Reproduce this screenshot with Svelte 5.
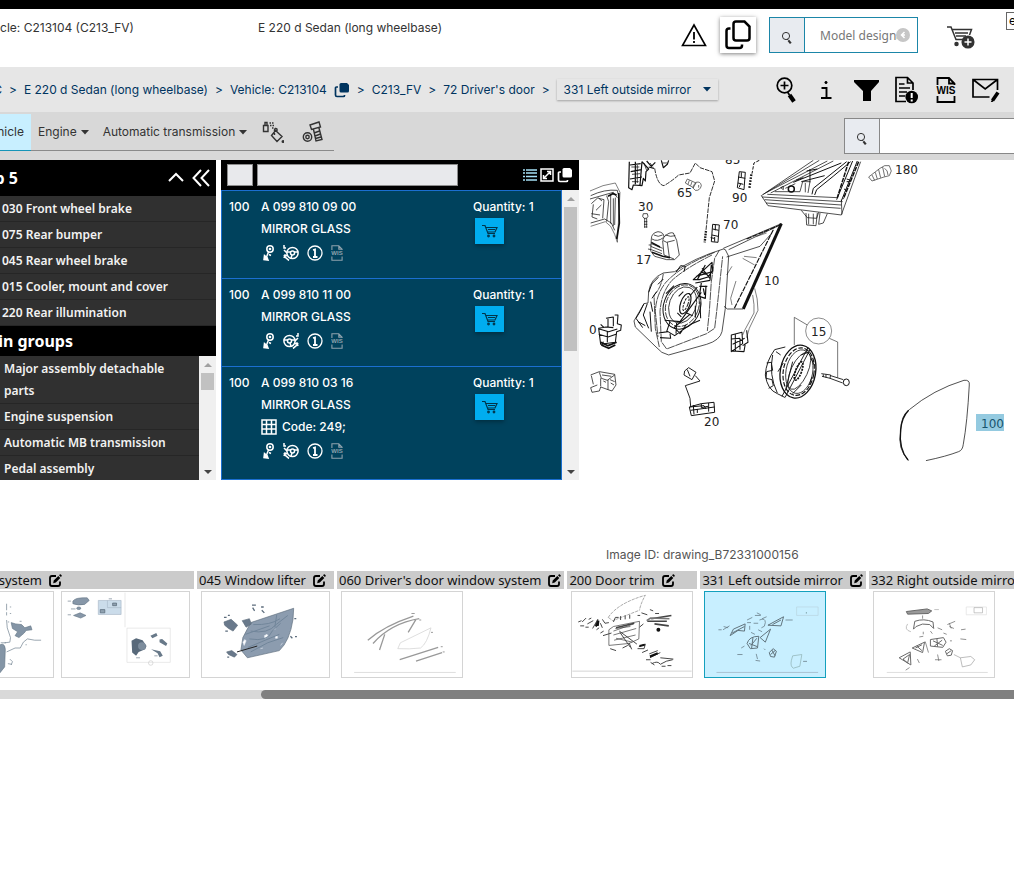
<script lang="ts">
  type Part = { pos: string; number: string; name: string; code?: string; side: "L" | "R" };

  const topGroups = [
    "030 Front wheel brake",
    "075 Rear bumper",
    "045 Rear wheel brake",
    "015 Cooler, mount and cover",
    "220 Rear illumination",
  ];

  const mainGroups = [
    "Major assembly detachable parts",
    "Engine suspension",
    "Automatic MB transmission",
    "Pedal assembly",
  ];

  const parts: Part[] = [
    { pos: "100", number: "A 099 810 09 00", name: "MIRROR GLASS", side: "L" },
    { pos: "100", number: "A 099 810 11 00", name: "MIRROR GLASS", side: "R" },
    { pos: "100", number: "A 099 810 03 16", name: "MIRROR GLASS", code: "Code: 249;", side: "L" },
  ];

  const callouts = [
    { x: 97, y: 37, label: "65" },
    { x: 145, y: 4, label: "85" },
    { x: 152, y: 42, label: "90" },
    { x: 58, y: 51, label: "30" },
    { x: 143, y: 69, label: "70" },
    { x: 56, y: 104, label: "17" },
    { x: 184, y: 125, label: "10" },
    { x: 315, y: 14, label: "180" },
    { x: 9, y: 174, label: "0" },
    { x: 231, y: 176, label: "15" },
    { x: 124, y: 266, label: "20" },
  ];
</script>

{#snippet magnifier()}
  <svg class="mag" viewBox="0 0 12 14" width="12" height="14" fill="none" stroke="#333">
    <circle cx="5" cy="5" r="3.6" />
    <path d="M6 8l1.4 1" />
    <path d="M7.4 9.4l2.4 3" stroke-width="2.2" />
  </svg>
{/snippet}

{#snippet copy()}
  <svg viewBox="0 0 16 16" width="16" height="16">
    <path d="M4 5H2.500Q1.500 5 1.500 6V13Q1.500 14.500 3 14.500H9.500Q10.500 14.500 10.500 13.500V13" fill="none" stroke="currentColor" stroke-width="1.700" />
    <path d="M7 1H13L15 3V9Q15 10.500 13.500 10.500H7Q5.500 10.500 5.500 9V2.500Q5.500 1 7 1Z" fill="currentColor" />
  </svg>
{/snippet}

{#snippet edit()}
  <svg class="edit" viewBox="0 0 13 13" width="13" height="13">
    <path d="M7 2H3Q1 2 1 4V10Q1 12 3 12H9Q11 12 11 10V7.500" fill="none" stroke="#000" stroke-width="1.800" />
    <path d="M4.200 9.300L4.700 6.500L9.300 1.900L11.300 3.900L6.800 8.600Z M10 1.200L10.800.4Q11.300 0 11.900.5L12.600 1.200Q13 1.800 12.600 2.300L11.900 3.100Z" />
  </svg>
{/snippet}

{#snippet wis(color: string)}
  <svg viewBox="0 0 20 26" width="100%" height="100%" fill="none" stroke={color} stroke-width="1.800">
    <path d="M1.500 8V1H13L18.500 6.500V8M13 1V6.500H18.500M1.500 19V25H18.500V19" />
    <text x="10" y="17" text-anchor="middle" font-family="Liberation Sans, sans-serif" font-weight="700" font-size="10" fill={color} stroke="none">WIS</text>
  </svg>
{/snippet}

{#snippet caret()}
  <svg class="caret" viewBox="0 0 8 5" width="8" height="5"><path d="M0 0H8L4 4.500Z" fill="currentColor" /></svg>
{/snippet}

{#snippet cart()}
  <svg viewBox="0 0 16 14" width="16" height="14" fill="none" stroke="#00354a" stroke-width="1.200">
    <path d="M0 1.500H3L6 9.500H13M4 3.500H15L13 8H6M6 5.500H13" />
    <circle cx="6.500" cy="12" r=".8" /><circle cx="12" cy="12" r=".8" />
  </svg>
{/snippet}

<div class="page">
  <div class="topline"></div>

  <header class="header">
    <div class="vehicle"><span>Vehicle: C213104 (C213_FV)</span></div>
    <div class="model">E 220 d Sedan (long wheelbase)</div>
    <div class="headerTools">
      <button type="button" class="plain warn" aria-label="Warnings">
        <svg viewBox="0 0 26 24" width="26" height="24" fill="none" stroke="#000" stroke-width="1.600">
          <path d="M13 2L24.500 22.500H1.500Z" />
          <path d="M13 9V16.500M13 18V20" stroke-width="1.800" />
        </svg>
      </button>
      <button type="button" class="copyButton" aria-label="Copy">
        <svg viewBox="0 0 26 30" width="26" height="30" fill="none" stroke="#000" stroke-width="2.500">
          <path d="M11 1.500H19.500L24.500 6.500V18Q24.500 20.500 22 20.500H11Q8.500 20.500 8.500 18V4Q8.500 1.500 11 1.500Z" />
          <path d="M5.500 8.500H4Q1.500 8.500 1.500 11V25.500Q1.500 28 4 28H14.500Q17 28 17 25.500V24.500" />
        </svg>
      </button>
      <div class="search">
        <button type="button" class="searchButton" aria-label="Search">{@render magnifier()}</button>
        <input type="text" aria-label="Model designation" placeholder="Model designation" />
        <button type="button" class="clear" aria-label="Clear">
          <svg viewBox="0 0 14 14" width="14" height="14"><circle cx="7" cy="7" r="7" fill="#c6c6c6" /><path d="M8.500 4L5.500 7L8.500 10M5.500 7H9" fill="none" stroke="#fff" stroke-width="1.500" /></svg>
        </button>
      </div>
      <button type="button" class="plain basket" aria-label="Shopping cart">
        <svg viewBox="0 0 28 24" width="28" height="24" fill="none" stroke="#333" stroke-width="1.500">
          <path d="M0 2H4L9 14.500H16M5 4.500H24.500L22.500 10M8 8H21M9 11H19" />
          <circle cx="9.500" cy="19" r="1.500" fill="#333" />
          <circle cx="21" cy="17" r="5.800" fill="#333" />
          <path d="M21 13.500V20.500M17.500 17H24.500" stroke="#fff" />
        </svg>
      </button>
      <div class="langBox">e</div>
    </div>
  </header>

  <nav class="crumbs">
    <div class="trail">
      <a href="#cat" class="cut">MBC</a>
      <span>&gt;</span>
      <a href="#model">E 220 d Sedan (long wheelbase)</a>
      <span>&gt;</span>
      <a href="#vehicle">Vehicle: C213104</a>
      {@render copy()}
      <span>&gt;</span>
      <a href="#fv">C213_FV</a>
      <span>&gt;</span>
      <a href="#door">72 Driver's door</a>
      <span>&gt;</span>
      <div class="dropdown">
        <select aria-label="Subgroup"><option>331 Left outside mirror</option></select>
        {@render caret()}
      </div>
    </div>
    <div class="tools">
      <button type="button" aria-label="Zoom">
        <svg viewBox="0 0 20 26" width="20" height="26" fill="none" stroke="#000">
          <circle cx="8.500" cy="8.500" r="7.300" stroke-width="1.700" />
          <path d="M8.500 4.500V12.500M4.500 8.500H12.500" stroke-width="1.700" />
          <path d="M11.500 15L13.500 18" stroke-width="1.700" />
          <path d="M13.500 18L18 24.500" stroke-width="4.200" />
        </svg>
      </button>
      <button type="button" aria-label="Information">
        <svg viewBox="0 0 12 20" width="12" height="20" fill="none" stroke="#000" stroke-width="1.900">
          <path d="M1.500 8H6.500V18M1 18H11.500" /><circle cx="6" cy="2.500" r="1.100" fill="#000" stroke-width="1" />
        </svg>
      </button>
      <button type="button" aria-label="Filter">
        <svg viewBox="0 0 25 22" width="25" height="22"><path d="M0 1H25V3L17 12V22H9V12L0 3Z" /></svg>
      </button>
      <button type="button" aria-label="Notes">
        <svg viewBox="-2 0 24 28" width="24" height="28" fill="none" stroke="#000" stroke-width="1.700">
          <path d="M10 25.500H0V1.500H11.500L17 7V14M11.500 1.500V7H17M3 8H8.500M3 12H14M3 16H11M3 20H9" />
          <circle cx="15.700" cy="21" r="6.300" fill="#000" stroke="none" />
          <path d="M15.700 17V22M15.700 23.500V25.500" stroke="#fff" stroke-width="2" />
        </svg>
      </button>
      <button type="button" aria-label="Workshop information"><span class="wisBig">{@render wis("#000")}</span></button>
      <button type="button" aria-label="Message">
        <svg viewBox="0 0 28 24" width="28" height="24" fill="none" stroke="#000" stroke-width="1.700">
          <path d="M17.500 19H1V1.500H25.500V12M1 1.500L13.200 11L25.500 1.500" />
          <path d="M20.500 22.500L26 14.500" stroke-width="3.600" /><path d="M19.500 24L21 22" />
        </svg>
      </button>
    </div>
  </nav>

  <div class="tabBar">
    <div class="tabs">
      <button type="button" class="active"><span>Vehicle</span></button>
      <button type="button">Engine {@render caret()}</button>
      <button type="button">Automatic transmission {@render caret()}</button>
      <button type="button" class="iconTab" aria-label="Paint and fluids">
        <svg viewBox="0 0 22 22" width="22" height="22" fill="none" stroke="#333" stroke-width="1.400">
          <path d="M1.500 4.500H6V10.500H1.500ZM3 4.500V1.500H5V4.500" />
          <path d="M7.500 2H12M8 4.500H12M10 7H12" stroke-dasharray="1.500 1" />
          <path d="M13.500 9.500L20 15.500L15 20.500L9.500 14.500ZM12.500 14V9Q13 6.500 15 8V12" /><circle cx="21" cy="20.500" r=".8" />
        </svg>
      </button>
      <button type="button" class="iconTab" aria-label="Standard parts">
        <svg viewBox="0 0 22 22" width="22" height="22" fill="none" stroke="#333" stroke-width="1.400">
          <circle cx="5.500" cy="16" r="4.200" /><circle cx="5.500" cy="16" r="1.700" />
          <path d="M8 4L17 1L18.500 6L9.500 8.500ZM11.500 8.500L14 20L20 18.500L17 7M12 12L17.500 10M13 15L18.500 13M13.500 17.500L19 16" />
        </svg>
      </button>
    </div>
    <div class="search partSearch">
      <button type="button" class="searchButton" aria-label="Search parts">{@render magnifier()}</button>
      <input type="text" aria-label="Part search" />
    </div>
  </div>

  <main class="workspace">
    <aside class="groups">
      <div class="topTitle">
        <h2><span>Top 5</span></h2>
        <svg viewBox="0 0 42 18" width="42" height="18" fill="none" stroke="#fff" stroke-width="2">
          <path d="M1 12L8 5L15 12M33 1L25.500 9L33 17M41 1L33.500 9L41 17" />
        </svg>
      </div>
      <ul class="topList">
        {#each topGroups as group}
          <li>{group}</li>
        {/each}
      </ul>
      <h2 class="mainTitle"><span>Main groups</span></h2>
      <div class="scrollPane">
        <ul class="mainList">
          {#each mainGroups as group}
            <li>{group}</li>
          {/each}
        </ul>
        <div class="scrollbar"><i class="up"></i><b class="short"></b><i class="down"></i></div>
      </div>
    </aside>

    <section class="parts">
      <div class="partsHead">
        <input type="text" class="posFilter" aria-label="Position" />
        <input type="text" class="textFilter" aria-label="Filter parts" />
        <div class="partsTools">
          <svg viewBox="0 0 14 12" width="14" height="12" stroke="#a5dff5" stroke-width="1.500"><path d="M0 1H2M0 4H2M0 7.500H2M0 11H2M3 1H14M3 4H14M3 7.500H14M3 11H14" /></svg>
          <svg viewBox="0 0 14 14" width="14" height="14" fill="none" stroke="#fff" stroke-width="1.500"><path d="M1 1H13V13H1ZM4 10L10 4M7 3.500H10.500V7M3.500 7V10.500H7" /></svg>
          {@render copy()}
        </div>
      </div>
      <div class="scrollPane">
        <div class="partList">
          {#each parts as part}
            <article class="part">
              <div>{part.pos}</div>
              <div>
                <div>{part.number}</div>
                <div>{part.name}</div>
                {#if part.code}
                  <div class="code">
                    <svg viewBox="0 0 16 16" width="16" height="16" fill="none" stroke="#fff" stroke-width="1.500"><path d="M1 1H15V15H1ZM1 5.500H15M1 10H15M5.500 1V15M10.500 1V15" /></svg>
                    {part.code}
                  </div>
                {/if}
                <div class="partIcons">
                  <svg viewBox="0 0 12 16" width="12" height="16" fill="none" stroke="#fff" stroke-width="1.500">
                    <circle cx="7" cy="4" r="3.200" /><circle cx="7" cy="4" r=".6" />
                    <path d="M5.500 7L3.500 12M6 9.500L8 10.500" />
                    <path d="M1.500 10.500L4 12.500L5 15L1 14.500Z" fill="#fff" />
                  </svg>
                  <svg class:flip={part.side === "R"} viewBox="0 0 16 16" width="16" height="16" fill="none" stroke="#fff" stroke-width="1.500">
                    <circle cx="9.500" cy="8" r="5.600" /><circle cx="9.500" cy="8" r="2" />
                    <path d="M4.500 7L8 7M11 7L15 7M9 10L8 13M1 0V3H3M1 5L4 8M1 10Q2 13 6 15.500M1 13L2 10L4.500 11" />
                  </svg>
                  <svg viewBox="0 0 16 16" width="16" height="16" fill="none" stroke="#fff" stroke-width="1.300">
                    <circle cx="8" cy="8" r="7" /><path d="M6 5L8 4.500V11.500M6 12H10.500" stroke-width="1.800" />
                  </svg>
                  <span class="wisSmall">{@render wis("#8fa3ad")}</span>
                </div>
              </div>
              <div>
                <div>Quantity: 1</div>
                <button type="button" class="addCart" aria-label="Add to cart">{@render cart()}</button>
              </div>
            </article>
          {/each}
        </div>
        <div class="scrollbar"><i class="up"></i><b></b><i class="down"></i></div>
      </div>
    </section>

    <section class="drawing">
      <svg viewBox="0 0 434 320" width="434" height="320">
        <g transform="translate(0 -5) scale(.3333)" fill="none" stroke="#111" stroke-width="2.200" stroke-linejoin="round">
          <!-- connector and cable at the top -->
          <path d="M148 20L146 98L156 104L160 90L186 92L190 70L196 78L198 50L206 42L186 20M150 30L182 26M152 50L184 44M150 72L186 66M166 20V88M186 20L180 90M200 18L214 34L226 22M206 36L222 40M244 16L250 38L262 28L266 16" stroke-width="3.600" />
          <path d="M154 36H178M156 58L180 56M172 30V84M156 80H176M192 24L200 46M210 24L218 34M248 24H262" />
          <path d="M224 40Q232 90 252 92Q276 78 296 60L330 54L346 24L360 38L396 50L404 78L388 128L378 226" stroke-dasharray="14 3" stroke-width="2.600" />
          <path d="M378 228L374 262" stroke-width="7" stroke-dasharray="5 3" />
          <path d="M538 16L522 24L516 56" stroke-width="3" stroke-dasharray="10 4" /><path d="M514 58L508 102" stroke-width="7" stroke-dasharray="5 4" />
          <!-- screw 65 -->
          <path d="M322 72L316 84L340 98L348 84ZM328 76L324 88M336 80L332 92M348 82Q362 78 364 92Q360 108 346 106Q336 100 340 92ZM356 90V98" stroke-width="1.800" />
          <!-- clip 90 -->
          <path d="M478 50L496 52L492 104L472 98L476 66ZM474 66L496 70M474 84L490 88M484 52V66M478 96L482 86" stroke-width="3" />
          <!-- housing on the left edge -->
          <path d="M30 108Q70 88 106 84L120 112L112 262L104 238L92 214L76 200L32 214" stroke-width="1.600" />
          <path d="M32 122Q74 102 112 106L114 116M30 132L100 112L112 128M34 146L54 128L66 138M32 204L74 192L94 204L104 226M40 148L36 186L52 192M56 130L72 134L68 190M80 122L86 140L80 200M92 120V206M100 130V214M64 150L48 166M34 176L60 180M106 128L104 210" />
          <path d="M116 114L118 204L110 252M84 124L98 116L110 120" stroke-width="5" />
          <!-- screw 30 -->
          <path d="M190 176H202L204 184L200 190H192L188 184ZM194 190V218M200 190V218M192 200H202M192 208H202M192 216H202" />
          <!-- clip 70 -->
          <path d="M398 208L418 210L414 262L394 260ZM398 222L416 226M396 240L414 244M406 210V226M392 248L402 250M404 246L404 260" stroke-width="3" />
          <!-- actuator 17 -->
          <path d="M214 252Q214 234 234 230Q252 232 252 246Q268 230 280 234L290 256L298 300L284 314L260 314L224 304L212 288ZM216 252Q232 262 250 248M252 246L248 256L260 262L284 256M248 258L252 300L282 312M262 262L268 306M214 266L248 280M212 274L246 288M214 284L246 296M206 270L214 270M204 282L214 284M222 240Q234 248 248 240M256 240L272 244L286 242" />
          <path d="M214 262L240 276M216 292L248 304L270 308" stroke-width="4.500" />
          <!-- mirror 10 -->
          <path d="M430 280L604 206L490 462H442L432 454M440 306L540 274L574 236M446 284L592 214" />
          <path d="M604 206L490 462" stroke-width="9" />
          <path d="M580 224L462 462M500 252L600 210" stroke-width="3.500" stroke-dasharray="16 3" />
          <path d="M468 378L452 430L456 450M488 310L524 330M492 304L530 308M456 334L440 360M530 244L560 234" stroke-width="1.600" />
          <path d="M430 282L436 284L446 304L436 460L426 530Q420 556 380 568L266 600Q244 596 228 576L166 516L162 498L192 446L204 444L206 410Q212 370 250 354L284 350Q340 310 430 282Z" />
          <path d="M250 356Q244 400 222 420L226 520L238 576M404 292Q300 334 256 384Q228 420 226 470L234 546M396 300Q316 340 276 376Q244 412 240 470L244 560L260 582L380 536L404 520L410 470L428 304M418 286L404 310L394 380L388 470L382 528" stroke-dasharray="24 2" />
          <path d="M288 352L302 332L316 334L312 350M206 412L216 386L236 366M216 430L230 410M192 446L180 470L168 490L188 518M202 446L190 480L206 520M210 470L214 530M250 372L234 388M212 440L218 470M174 500L196 512" stroke-width="3" />
          <path d="M340 374L396 322L398 348L384 366L358 374ZM348 364L390 352M352 374L376 330M366 340L390 370M346 384L390 376L394 330M358 394H382M364 384L358 424L376 430L378 392M362 350L380 358M370 400L374 420" stroke-width="3.600" />
          <ellipse cx="306" cy="454" rx="55" ry="70" transform="rotate(20 306 454)" stroke-width="3" />
          <ellipse cx="307" cy="452" rx="49" ry="64" transform="rotate(20 307 452)" stroke-dasharray="20 4" />
          <ellipse cx="308" cy="450" rx="40" ry="56" transform="rotate(20 308 450)" />
          <ellipse cx="316" cy="446" rx="14" ry="32" transform="rotate(20 316 446)" stroke-width="3.500" />
          <ellipse cx="318" cy="446" rx="6" ry="22" transform="rotate(20 318 446)" stroke-width="3" stroke-dasharray="8 3" />
          <path d="M258 416L282 392M254 496L300 500L364 412M284 516L330 478M270 500L260 530M290 504L288 536M320 474L338 482M332 420L352 396M236 534L264 530L284 542L332 508L360 496M240 548L272 550L270 536M282 516L300 536L318 510M360 440L362 490M346 452V488M296 424L310 410M292 474L304 486" stroke-width="3.200" />
          <path d="M524 400Q534 430 534 466L508 520L500 548M518 420Q524 450 522 474L494 526L488 540" stroke-width="1.600" />
          <path d="M454 540L486 532L488 566L454 590ZM454 552L480 550M458 568L494 550M456 588L492 590L496 566M466 536V588M480 550V584M500 526L504 562L488 572" stroke-width="3.200" />
          <!-- triangular frame at the right -->
          <path d="M544 122L700 16M544 122L564 152L784 180L842 20M550 118L718 16M560 112L742 18M572 114L760 18M546 126L788 140M562 118L772 128M554 134L784 150M784 134L786 178M558 144L782 160" />
          <path d="M770 134L818 18M784 138L832 18M800 80H812M800 72L812 76M792 102L800 106M696 118L700 100Q750 60 800 20M704 120L710 104Q758 66 812 20M640 82L784 24M648 76L670 68M664 80L734 62M690 42V82M680 48L712 42" stroke-width="3" />
          <path d="M806 20L772 128M836 20L790 132" stroke-width="4.500" stroke-dasharray="14 3" />
          <circle cx="634" cy="102" r="9" stroke-width="4.500" /><path d="M602 98L610 94V104ZM616 100L646 86M584 110H660L668 80L690 80L684 114M676 84V112" />
          <path d="M664 166L682 188L710 190L716 172M678 174L680 210L708 212L712 174M686 176V208M700 176V208M720 174L716 208L730 204L742 176" />
          <path d="M866 66L900 40L914 32L928 32L934 48L928 62L912 66L876 78ZM876 60L884 76M886 52L892 72M896 44L902 68M908 36L914 64M914 40Q924 46 924 60" stroke-width="1.800" />
          <!-- plug and socket, lower left -->
          <path d="M78 490L100 486V514M84 488V516M104 480H114L112 506L124 510L122 526L110 530L106 562L62 568L56 520L78 516L100 518M58 522L86 530L112 522M56 538L84 546L108 538M70 560L66 570M62 508L72 518M82 528V562" stroke-width="3.200" />
          <path d="M62 562L84 572L110 562M64 570L86 580L106 570" stroke-width="5" />
          <path d="M32 660L58 650L104 658L108 690L96 708L84 704L62 696L58 708L36 712L32 698L52 690M58 652L64 670L82 676L104 660M62 670V694M84 674V704M34 662L40 688M90 674L104 680M66 660L94 664M70 678L78 682M92 684L102 690" />
          <!-- lamp 20 -->
          <path d="M314 648L326 638L348 652L336 674L312 660ZM322 644L330 664M346 662L360 678L316 692L330 730L332 754" stroke-width="2.800" />
          <path d="M328 756L364 746L402 742L404 772L334 782ZM332 766L404 756M340 750L342 778M364 746V758L384 754M330 756L372 752L378 762M386 744V770M352 762V774" stroke-width="3" />
          <!-- drive unit 15 -->
          <ellipse cx="654" cy="650" rx="53" ry="80" transform="rotate(10 654 650)" stroke-width="4" />
          <ellipse cx="656" cy="650" rx="46" ry="72" transform="rotate(10 656 650)" stroke-width="3.500" stroke-dasharray="14 5" />
          <ellipse cx="658" cy="650" rx="40" ry="66" transform="rotate(10 658 650)" />
          <ellipse cx="658" cy="648" rx="25" ry="60" transform="rotate(25 658 648)" />
          <ellipse cx="656" cy="648" rx="9" ry="29" transform="rotate(20 656 648)" stroke-width="5" stroke-dasharray="6 3" />
          <path d="M616 576L584 584Q558 620 556 660Q562 704 592 716L616 728M588 590L602 600M560 624L574 622L578 646L560 650L558 670L576 674L580 692L566 700M578 600Q566 660 592 714M684 578L606 724M690 584L616 726M638 620L618 700M664 600L688 590M664 690L638 716M694 612L704 632M696 666L688 690M610 624L594 650" stroke-width="2.800" />
          <path d="M643 570V487L682 510M748 550L773 561V668" stroke="#333" stroke-width="2" />
          <circle cx="716" cy="528" r="39" stroke="#555" stroke-width="2" />
          <path d="M724 656L752 660L750 670L726 664M730 658V666M738 658V668M752 662L790 674M750 670L788 684" stroke-width="2.600" />
          <ellipse cx="799" cy="682" rx="9" ry="10" stroke-width="3" />
          <!-- mirror glass 100 -->
          <path d="M986 917Q952 882 962 830Q962 782 988 764Q1060 704 1152 676Q1170 674 1168 690Q1162 802 1150 868Q1148 886 1136 890Q1100 904 1038 917" />
          <path d="M984 915Q956 882 962 824Q966 786 986 766" stroke-width="4" />
        </g>
        {#each callouts as callout}
          <text x={callout.x} y={callout.y}>{callout.label}</text>
        {/each}
        <rect x="396" y="254" width="28" height="17" fill="#94cae0" />
        <text x="401" y="268" class="selected">100</text>
      </svg>
    </section>
  </main>

  <p class="imageId">Image ID: drawing_B72331000156</p>

  <div class="strip">
    <section class="thumbGroup first">
      <h3>Door locking system {@render edit()}</h3>
      <div class="thumbs">
        <a href="#t1" class="thumb wide" aria-label="Lock system">
          <svg viewBox="0 0 387 261">
            <g fill="#8495a6" stroke="#667888" stroke-width="2">
              <path d="M260 94L274 98L292 100L302 110L320 104L324 116L306 118L300 126L284 140L272 134L280 122L264 112Z" />
              <path d="M214 170Q240 148 242 176L240 230L224 250Z" />
              <path d="M246 36V56M246 62V72M246 86L248 110L258 140L256 154L240 156M256 46H260M256 66H260M250 92H254M286 90H292M228 156H244M246 184L272 172L288 172Q296 150 310 144L332 148H352M304 162H308M256 206L264 214L260 224M250 220L262 222" fill="none" />
            </g>
          </svg>
        </a>
        <a href="#t2" class="thumb wide" aria-label="Keys">
          <svg viewBox="0 0 387 261" stroke-width="2">
            <g fill="#8797a8" stroke="#687988">
              <path d="M32 28Q40 16 76 18L82 26L68 38Q48 42 32 36ZM34 72L54 64L72 72L56 80Z" /><ellipse cx="50" cy="50" rx="6" ry="4" />
              <path d="M16 28H26M26 52H40M16 70H26M142 21H152M226 202H238M282 196H292" />
            </g>
            <path d="M110 26H180V69H110Z" fill="#cbdcea" stroke="#a8b8c8" /><path d="M138 26V48H180" fill="none" stroke="#a8b8c8" /><path d="M116 54H130V64H116ZM154 34H166V42H154Z" fill="#8fa1b0" stroke="#506070" />
            <path d="M198 111H331V216H198ZM192 2V108" fill="none" stroke="#ddd" />
            <path d="M212 150L226 142L246 148L258 166L254 176L234 184L226 196L214 186Z" fill="#58697a" /><circle cx="244" cy="166" r="12" fill="#7d8d9d" />
            <path d="M270 134L288 126L292 134L276 142ZM298 146L306 144L322 158L318 166L298 154ZM272 176L300 182L308 196L298 200L292 188Z" fill="#687989" />
            <circle cx="271" cy="218" r="7" fill="none" stroke="#ccc" />
          </svg>
        </a>
      </div>
    </section>
    <section class="thumbGroup">
      <h3>045 Window lifter {@render edit()}</h3>
      <div class="thumbs">
        <a href="#t3" class="thumb wide" aria-label="Window lifter">
          <svg viewBox="0 0 387 261" stroke="#5c6c7c" stroke-width="2">
            <path d="M148 94L280 50L278 84Q268 150 236 180L138 202L118 178L124 140Z" fill="#8c9caf" />
            <path d="M134 150L128 164L124 154L130 146ZM190 134L198 130L202 136L192 142ZM224 136H230V142H224ZM218 116L226 112M240 164L246 156M178 174L186 172" fill="#fff" stroke="#e0e7ef" />
            <path d="M156 100Q210 102 238 82M148 120Q200 130 226 100L262 72M144 144Q202 154 214 120L240 96M148 184L200 156L248 140M132 130L206 104M140 170L236 130M228 70L222 108" fill="none" stroke="#71859a" stroke-width="3" />
            <path d="M66 92L88 84L108 102L94 120L80 112L68 102ZM122 88L144 82L150 98L134 108ZM74 184L90 180L106 192L98 200L80 192Z" fill="#69798b" />
            <path d="M106 184L168 166" stroke="#222" stroke-width="3" />
            <path d="M152 40H164M180 46H188M66 78H74M78 72H84M70 120H78M282 82H288M284 137H290M270 136L276 142M76 200H82M154 48L160 58M182 56L190 64" stroke-width="4" />
          </svg>
        </a>
      </div>
    </section>
    <section class="thumbGroup">
      <h3>060 Driver's door window system {@render edit()}</h3>
      <div class="thumbs">
        <a href="#t4" class="thumb" aria-label="Driver's door window system">
          <svg viewBox="0 0 366 261" fill="none" stroke="#999" stroke-width="4">
            <path d="M78 148Q128 104 218 74M94 158Q150 96 236 82M130 130L114 178M226 84L202 124M176 208L294 170M226 212L306 186" />
            <path d="M170 174L178 156L272 110Q260 158 240 172Q206 176 170 174Z" stroke="#ccc" stroke-width="2" />
            <path d="M212 66H222M236 86H242M272 124H278M302 168H308M308 184H314" stroke-width="3" /><path d="M36 247H348" stroke="#ccc" stroke-width="2" />
          </svg>
        </a>
      </div>
    </section>
    <section class="thumbGroup">
      <h3>200 Door trim {@render edit()}</h3>
      <div class="thumbs">
        <a href="#t5" class="thumb" aria-label="Door trim">
          <svg viewBox="0 0 366 261" fill="none" stroke="#444" stroke-width="2.200">
            <path d="M110 78Q140 34 224 10Q210 34 206 56M110 78L124 88L206 56" stroke="#888" stroke-dasharray="10 3" />
            <path d="M112 116L126 106L206 90L204 144L174 158L112 164ZM126 120L188 98M128 148L194 132M126 132L196 112M134 142L184 154M132 112L178 106" />
            <path d="M134 110L190 96M230 90H290M242 82L304 72M252 98L296 104" stroke-width="5" /><path d="M228 88L240 80L298 82" stroke-width="5" stroke="#777" />
            <path d="M144 120L198 160M146 124L178 170M174 156L182 176M126 92L132 78L142 78M148 86V74M162 84V72M176 82V70M200 72H208M18 92L28 88M30 92L42 80M24 104H36M40 108H50M50 84L58 80M46 98L64 88M62 112L78 84L70 104M74 116L82 110M86 96L92 110M92 84L100 96L112 94M86 126L96 120M94 134L120 126M116 174L134 180M154 172L170 164M206 108L218 98M212 64L230 70M238 54L248 58M254 66H266" stroke-width="3" />
            <path d="M204 168L224 160L220 174L200 174M214 186L232 178M236 190L262 180M238 202L270 186M226 208H240M244 220Q262 210 270 222Q288 210 308 208M240 216L252 224M270 202L310 206M274 228H286M292 226H304" stroke-width="3" />
            <path d="M72 106L80 88L78 104M206 166L222 162M238 198L262 188" stroke="#111" stroke-width="6" />
            <circle cx="264" cy="116" r="6" fill="#111" stroke="none" /><path d="M0 243H366" stroke="#bbb" stroke-width="2" />
          </svg>
        </a>
      </div>
    </section>
    <section class="thumbGroup">
      <h3>331 Left outside mirror {@render edit()}</h3>
      <div class="thumbs">
        <a href="#t6" class="thumb current" aria-label="Left outside mirror">
          <svg viewBox="0 0 366 261" fill="none" stroke="#5f727b" stroke-width="2.200">
            <path d="M76 134L86 114L122 98L120 120L100 118ZM82 126L120 106M192 102L240 76L232 104ZM206 100L232 86M128 158Q134 136 164 136L160 172L138 174ZM140 164L158 142M134 158L160 168M146 140L142 172M168 140L200 114L184 154ZM196 186L208 174L218 182L212 200L200 198ZM200 192L214 180M204 178L214 196" stroke-width="3" />
            <path d="M264 210L268 196L296 192L290 228L270 234Q260 228 264 210Z" stroke="#8aa" stroke-width="2" />
            <path d="M40 116H50M54 116L74 104M56 106L70 110M128 86L144 78M128 94H140M158 64L170 70M152 72H170M136 104V116M148 96H162M166 86Q184 78 184 94Q184 108 172 110M174 82L188 76M140 124L152 130M162 116L174 122M110 172L120 166M98 192H114M156 190L160 206M154 210L168 212M180 174L184 178M246 86H268M300 213H312" />
            <path d="M280 46H346V72H280Z" stroke="#b8d3de" stroke-width="2" /><path d="M310 62V66" stroke="#577" /><path d="M34 247H346" stroke="#9ab" stroke-width="2" />
          </svg>
        </a>
      </div>
    </section>
    <section class="thumbGroup">
      <h3>332 Right outside mirror {@render edit()}</h3>
      <div class="thumbs">
        <a href="#t7" class="thumb" aria-label="Right outside mirror">
          <svg viewBox="0 0 366 261" fill="none" stroke="#666" stroke-width="2.200">
            <path d="M98 60L162 52L176 58L166 66L102 68Z" stroke-width="3" fill="#999" />
            <path d="M120 114L124 90Q152 80 180 92L182 112L170 100Q146 94 128 106Z" stroke-width="3" /><path d="M102 98Q90 116 112 122M184 54H198" stroke="#aaa" />
            <path d="M116 172L154 154L148 186ZM126 172L146 162M130 166L146 180M172 146L212 140L220 154L210 170L172 166ZM180 150L210 164M208 148L184 166M192 144L194 168M76 202L110 184L112 224ZM88 206L108 192L102 218ZM218 182L230 174L240 180L236 194L224 196ZM222 190L236 180" stroke-width="3" />
            <path d="M156 152L166 186M138 138L150 136M194 110L208 116M224 100L248 90M230 106L244 112M266 116L280 114M264 144L282 146M230 96L236 112M150 122V130M172 120L178 128M212 126L222 130M186 208H206M194 192L198 212M132 206L138 218M96 240L108 232M232 150H238M148 72V82" />
            <path d="M244 192L264 202L270 230L296 224L308 208L296 198L264 202" stroke="#999" stroke-width="2" /><path d="M282 46H344V70H282Z" stroke="#ddd" stroke-width="2" /><path d="M306 48H332V64H306Z" stroke="#aaa" stroke-width="2" /><path d="M38 247H348" stroke="#ccc" stroke-width="2" />
          </svg>
        </a>
      </div>
    </section>
  </div>
  <div class="hScroll"><div></div></div>
</div>

<style>
  :global(body) {
    margin: 0;
    background: #fff;
  }

  .page {
    overflow: hidden;
    font-family: Inter, "Noto Sans", sans-serif;
    font-size: 12px;
    line-height: 22px;
    color: #333;
  }

  button {
    font: inherit;
    color: inherit;
    border: 0;
    padding: 0;
    background: none;
    cursor: pointer;
  }

  svg {
    display: block;
    flex: none;
  }

  h2,
  h3,
  p,
  ul {
    margin: 0;
    padding: 0;
    list-style: none;
  }

  .topline {
    height: 9px;
    background: #000;
  }

  .header {
    display: flex;
    height: 58px;
    white-space: nowrap;
  }

  .vehicle {
    display: flex;
    justify-content: flex-end;
    width: 134px;
    margin-right: 124px;
    padding-top: 8px;
    overflow: hidden;
  }

  .model {
    padding-top: 8px;
  }

  .headerTools {
    display: flex;
    align-items: flex-start;
    margin-left: auto;
    padding-top: 8px;
  }

  .warn {
    margin: 6px 13px 0 0;
  }

  .copyButton {
    display: flex;
    align-items: center;
    justify-content: center;
    width: 36px;
    height: 36px;
    margin-right: 13px;
    box-shadow: 0 1px 4px rgba(0, 0, 0, 0.5);
  }

  .search {
    position: relative;
    display: flex;
    box-sizing: border-box;
    width: 149px;
    height: 36px;
    border: 1px solid #1b86a8;
    background: #fff;
  }

  .searchButton {
    display: flex;
    align-items: center;
    justify-content: center;
    flex: 0 0 35px;
    padding-top: 6px;
    border-right: 1px solid #1b86a8;
    background: #e8ebf0;
  }

  .search input {
    flex: 1;
    min-width: 0;
    border: 0;
    padding: 0 20px 0 15px;
    font-family: "Noto Sans", sans-serif;
    font-size: 12px;
    background: none;
    outline: none;
  }

  .search input::placeholder {
    color: #777;
  }

  .clear {
    position: absolute;
    right: 7px;
    top: 10px;
  }

  .basket {
    margin: 8px 31px 0 29px;
  }

  .langBox {
    box-sizing: border-box;
    width: 8px;
    height: 18px;
    margin-top: -5px;
    padding-left: 2px;
    overflow: hidden;
    border: 1px solid #666;
    border-right: 0;
    line-height: 16px;
    color: #000;
  }

  .crumbs {
    display: flex;
    align-items: center;
    height: 45px;
    background: #e6e6e6;
    color: #00345f;
    white-space: nowrap;
  }

  .trail {
    display: flex;
    align-items: center;
    gap: 7px;
  }

  .trail a {
    color: inherit;
    text-decoration: none;
  }

  .trail .cut {
    display: flex;
    justify-content: flex-end;
    width: 2px;
    overflow: hidden;
  }

  .dropdown {
    position: relative;
    display: flex;
    align-items: center;
    box-shadow: 0 1px 2px rgba(0, 0, 0, 0.3);
  }

  .dropdown select {
    height: 21px;
    border: 0;
    padding: 0 26px 0 7px;
    appearance: none;
    font: inherit;
    color: inherit;
    background: none;
  }

  .dropdown :global(.caret) {
    position: absolute;
    right: 7px;
    pointer-events: none;
  }

  .tools {
    display: flex;
    margin-left: auto;
    padding-right: 8px;
  }

  .tools button {
    display: flex;
    align-items: center;
    justify-content: center;
    width: 40px;
    height: 40px;
  }

  .wisBig {
    width: 20px;
    height: 26px;
  }

  .tabBar {
    display: flex;
    justify-content: space-between;
    height: 48px;
    background: #d8d8d8;
  }

  .tabs {
    display: flex;
    box-sizing: border-box;
    height: 37px;
    margin-top: 2px;
    border-bottom: 1px solid #8a8a8a;
  }

  .tabs button {
    display: flex;
    align-items: center;
    gap: 4px;
    padding: 0 7px;
  }

  .tabs .iconTab {
    padding: 0 10px 0 8px;
  }

  .tabs .active {
    justify-content: flex-end;
    box-sizing: border-box;
    width: 31px;
    height: 37px;
    overflow: hidden;
    border-bottom: 1px solid #1695b8;
    background: #c8efff;
  }

  .partSearch {
    width: 172px;
    margin: 6px -2px 0 0;
    border-color: #888;
  }

  .partSearch .searchButton {
    border-color: #888;
  }

  .workspace {
    display: grid;
    grid-template-columns: 216px 358px 1fr;
    height: 320px;
    column-gap: 5px;
  }

  .groups,
  .parts {
    display: flex;
    flex-direction: column;
    min-height: 0;
  }

  .groups {
    font-family: "Noto Sans", sans-serif;
    font-weight: 600;
    color: #f2f2f2;
    background: #303030;
  }

  .groups h2 {
    display: flex;
    justify-content: flex-end;
    overflow: hidden;
    font-size: 16px;
    color: #fff;
    white-space: nowrap;
  }

  .topTitle {
    display: flex;
    align-items: center;
    justify-content: space-between;
    flex: 0 0 36px;
    padding-right: 6px;
    background: #000;
  }

  .topTitle h2 {
    width: 18px;
  }

  .groups .mainTitle {
    flex: 0 0 30px;
    align-items: center;
    padding-right: 143px;
    background: #000;
  }

  .topList li,
  .mainList li {
    padding: 2px 0 1px 2px;
    border-bottom: 1px solid #262626;
  }

  .mainList li {
    padding: 2px 20px 1px 4px;
  }

  .mainList {
    flex: 1;
  }

  .scrollPane {
    display: flex;
    flex: 1;
    min-height: 0;
    overflow: hidden;
  }

  .scrollbar {
    display: flex;
    flex-direction: column;
    align-items: center;
    flex: 0 0 17px;
    background: #f0f0f0;
  }

  .scrollbar i {
    margin: 7px 0 6px;
    border: 4px solid transparent;
  }

  .scrollbar .up {
    border-top: 0;
    border-bottom-color: #a0a0a0;
  }

  .scrollbar .down {
    margin-top: auto;
    border-bottom: 0;
    border-top-color: #444;
  }

  .scrollbar b {
    width: 13px;
    height: 144px;
    background: #c1c1c1;
  }

  .scrollbar .short {
    height: 17px;
  }

  .partsHead {
    display: flex;
    align-items: center;
    gap: 4px;
    flex: 0 0 30px;
    padding: 0 6px;
    background: #000;
  }

  .partsHead input {
    box-sizing: border-box;
    height: 22px;
    border: 1px solid #8c8c8c;
    background: #e8e9ec;
  }

  .posFilter {
    width: 26px;
  }

  .textFilter {
    width: 201px;
  }

  .partsTools {
    display: flex;
    align-items: center;
    gap: 3px;
    margin-left: auto;
    color: #fff;
  }

  .partList {
    display: flex;
    flex: 1;
    flex-direction: column;
    border: 1px solid #1b6fd0;
    border-top: 0;
    background: #00425d;
    color: #fff;
    font-weight: 500;
  }

  .part {
    display: grid;
    grid-template-columns: 32px 1fr 88px;
    padding: 5px 0 14px 7px;
    border-top: 1px solid #1b6fd0;
  }

  .code {
    display: flex;
    align-items: center;
    gap: 5px;
  }

  .partIcons {
    display: flex;
    align-items: center;
    gap: 8px;
    height: 22px;
    margin-top: 2px;
    padding-left: 2px;
  }

  .flip {
    transform: scaleX(-1);
  }

  .wisSmall {
    width: 12px;
    height: 16px;
  }

  .addCart {
    display: flex;
    align-items: center;
    justify-content: center;
    width: 29px;
    height: 26px;
    margin-left: 2px;
    background: #00adef;
    box-shadow: 0 2px 4px rgba(0, 0, 0, 0.3);
  }

  .drawing {
    min-width: 0;
    margin-left: -4px;
    overflow: hidden;
  }

  .drawing text {
    font-family: "DejaVu Sans", sans-serif;
    font-size: 12px;
    fill: #222;
  }

  .drawing .selected {
    fill: #17546e;
  }

  .imageId {
    margin-top: 64px;
    padding-left: 606px;
    color: #555;
  }

  .strip {
    display: flex;
    gap: 3px;
    margin-top: 5px;
    overflow: hidden;
  }

  .thumbGroup {
    flex: none;
  }

  .first {
    display: flex;
    flex-direction: column;
    align-items: flex-end;
    width: 194px;
  }

  h3 {
    display: flex;
    align-items: center;
    gap: 7px;
    height: 18px;
    padding: 0 3px 0 2px;
    font-family: "Noto Sans", sans-serif;
    font-size: 13px;
    font-weight: 400;
    color: #111;
    background: #cbcbcb;
    white-space: nowrap;
  }

  .first h3 {
    box-sizing: border-box;
    width: 320px;
    justify-content: flex-end;
    padding-right: 132px;
  }

  .thumbs {
    display: flex;
    gap: 7px;
    padding: 2px 4px 0;
  }

  .thumb {
    box-sizing: border-box;
    width: 122px;
    height: 87px;
    border: 1px solid #d4d4d4;
  }

  .thumb svg {
    width: 100%;
    height: 100%;
  }

  .wide {
    width: 129px;
  }

  .current {
    border-color: #14a0bd;
    background: #c8efff;
  }

  .hScroll {
    height: 9px;
    margin-top: 12px;
    background: #d9d9d9;
  }

  .hScroll div {
    height: 9px;
    margin-left: 261px;
    border-radius: 5px 0 0 5px;
    background: #808080;
  }
</style>
